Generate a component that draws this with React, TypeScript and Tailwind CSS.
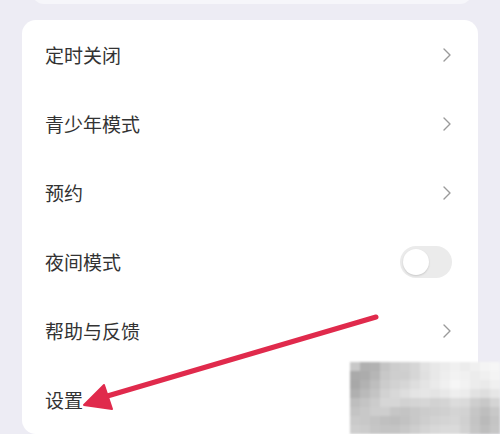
import React from "react";

const rows = [
  { label: "定时关闭", kind: "chevron" },
  { label: "青少年模式", kind: "chevron" },
  { label: "预约", kind: "chevron" },
  { label: "夜间模式", kind: "toggle" },
  { label: "帮助与反馈", kind: "chevron" },
  { label: "设置", kind: "none" },
];

// pixelated blur block in the bottom-right corner
const mosaic = [
  [200, 176, 178, 196, 205, 208, 214, 226, 232, 236, 240, 236, 240, 244, 246],
  [170, 172, 182, 200, 206, 206, 214, 224, 232, 238, 242, 240, 236, 240, 244],
  [168, 178, 190, 204, 210, 214, 222, 228, 234, 240, 246, 242, 236, 234, 240],
  [176, 186, 196, 210, 216, 222, 228, 230, 228, 232, 238, 236, 226, 222, 230],
  [190, 196, 204, 214, 214, 210, 212, 214, 210, 212, 220, 218, 206, 200, 212],
  [196, 200, 206, 206, 198, 196, 200, 204, 206, 208, 212, 210, 198, 190, 200],
  [202, 200, 196, 192, 190, 194, 200, 206, 210, 212, 214, 208, 196, 186, 196],
  [206, 204, 198, 196, 196, 200, 206, 212, 216, 218, 218, 210, 198, 190, 198],
];

function Chevron() {
  return (
    <svg width="10" height="16" viewBox="0 0 10 16" fill="none">
      <path d="M2 2l6 6-6 6" stroke="#9a9a9a" strokeWidth="1.4" strokeLinecap="round" strokeLinejoin="round" />
    </svg>
  );
}

export default function App() {
  return (
    <div
      className="relative h-[434px] w-[500px] overflow-hidden bg-[#edecf4]"
      style={{ fontFamily: '"Noto Sans CJK SC", "Noto Sans", sans-serif' }}
    >
      {/* tail of the previous card */}
      <div className="absolute left-[32px] top-[-20px] h-[24px] w-[440px] rounded-b-[12px] bg-[#f6f6fa]" />

      <div className="absolute left-[22px] top-[20px] w-[456px] rounded-[14px] bg-white">
        {rows.map((r) => (
          <div key={r.label} className="flex h-[69px] items-center justify-between pl-[23px] pr-[26px]">
            <span className="text-[19px] leading-none text-[#333]">{r.label}</span>
            {r.kind === "chevron" && <Chevron />}
            {r.kind === "toggle" && (
              <div className="flex h-[32px] w-[52px] items-center rounded-full bg-[#ebebeb] px-[3px]">
                <div className="h-[26px] w-[26px] rounded-full bg-white shadow-[0_1px_2px_rgba(0,0,0,0.15)]" />
              </div>
            )}
          </div>
        ))}
      </div>

      {/* mosaic */}
      <div className="absolute left-[350px] top-[362px] grid grid-cols-[repeat(15,10px)] blur-[1px]">
        {mosaic.flatMap((row, i) =>
          row.map((v, j) => (
            <div key={`${i}-${j}`} className="h-[9px] w-[10px]" style={{ backgroundColor: `rgb(${v},${v},${v})` }} />
          ))
        )}
      </div>

      {/* annotation arrow */}
      <svg className="absolute left-0 top-0" width="500" height="434" viewBox="0 0 500 434">
        <line x1="376" y1="317" x2="104" y2="397" stroke="#e02a4c" strokeWidth="5" strokeLinecap="round" />
        <polygon points="84,405 104,385 112,409" fill="#e02a4c" stroke="#e02a4c" strokeWidth="2" strokeLinejoin="round" />
      </svg>
    </div>
  );
}
